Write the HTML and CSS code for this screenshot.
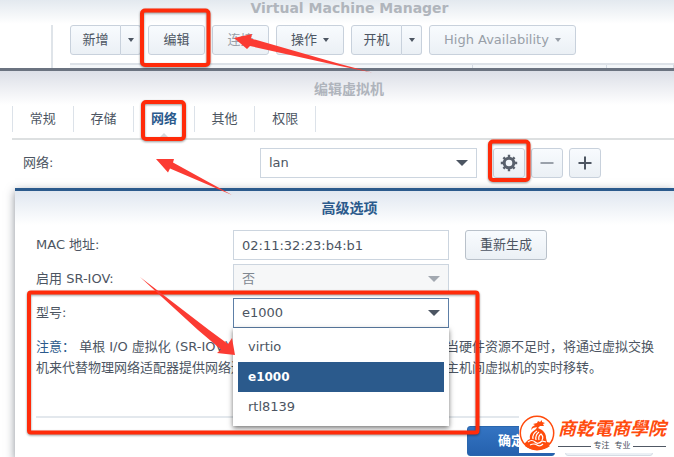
FILE: index.html
```html
<!DOCTYPE html>
<html lang="zh-CN">
<head>
<meta charset="utf-8">
<title>Virtual Machine Manager</title>
<link rel="stylesheet" href="styles.css">
</head>
<body>
<header class="manager">
  <h1 class="manager-title">Virtual Machine Manager</h1>
  <div class="manager-body">
    <div class="toolbar">
      <div class="split"><button class="btn">新增</button><button class="btn caret-btn" aria-label="新增选项"><span class="caret"></span></button></div>
      <button class="btn">编辑</button>
      <button class="btn" disabled>连接</button>
      <button class="btn menu">操作<span class="caret"></span></button>
      <div class="split"><button class="btn">开机</button><button class="btn caret-btn" aria-label="开机选项"><span class="caret"></span></button></div>
      <button class="btn menu" disabled>High Availability<span class="caret"></span></button>
    </div>
    <div class="columns"><span></span><span></span><span></span></div>
  </div>
</header>
<main class="editor">
  <h2 class="editor-title">编辑虚拟机</h2>
  <div class="tabbar">
    <nav class="tabs">
      <button class="tab">常规</button>
      <button class="tab">存储</button>
      <button class="tab active">网络</button>
      <button class="tab">其他</button>
      <button class="tab">权限</button>
    </nav>
  </div>
  <div class="network">
    <label for="network">网络:</label>
    <div class="select"><select id="network"><option>lan</option></select></div>
    <div class="tools">
      <button class="btn icon" aria-label="设置">
        <svg width="18" height="18" viewBox="0 0 18 18"><g stroke="#59616d" fill="none"><circle cx="9" cy="9" r="4.800" stroke-width="3"/><path stroke-width="2.400" d="M9 .8v3M9 14.200v3M.8 9h3M14.200 9h3M3.400 3.400l2 2M12.600 12.600l2 2M14.600 3.400l-2 2M5.400 12.600l-2 2"/></g></svg>
      </button>
      <button class="btn icon" aria-label="删除" disabled>
        <svg width="14" height="14" viewBox="0 0 14 14"><path d="M.5 7h13" stroke="#9aa1aa" stroke-width="2"/></svg>
      </button>
      <button class="btn icon" aria-label="添加">
        <svg width="14" height="14" viewBox="0 0 14 14"><path d="M.5 7h13M7 .5v13" stroke="#4d5561" stroke-width="2"/></svg>
      </button>
    </div>
  </div>
  <section class="panel">
    <h3 class="panel-title">高级选项</h3>
    <div class="form">
      <label for="mac">MAC 地址:</label>
      <input class="text" id="mac" value="02:11:32:23:b4:b1">
      <button class="btn regen">重新生成</button>
      <label for="sriov">启用 SR-IOV:</label>
      <div class="select"><select id="sriov" disabled><option>否</option></select></div>
      <label for="model">型号:</label>
      <div class="select open">
        <select id="model"><option>e1000</option></select>
        <ul class="options">
          <li>virtio</li>
          <li class="chosen">e1000</li>
          <li>rtl8139</li>
        </ul>
      </div>
    </div>
    <div class="note">
      <span><b>注意：</b>&nbsp;单根 I/O 虚拟化 (SR-IOV)</span><span>当硬件资源不足时，将通过虚拟交换</span>
      <span>机来代替物理网络适配器提供网络连</span><span>主机间虚拟机的实时移转。</span>
    </div>
    <footer class="actions">
      <button class="btn primary">确定</button>
      <button class="btn" aria-label="取消"></button>
    </footer>
  </section>
</main>

<svg class="marks" width="674" height="457" viewBox="0 0 674 457" aria-hidden="true">
  <g class="boxes">
    <rect x="142" y="10.500" width="66.500" height="54.500" rx="3"/>
    <rect x="143" y="102" width="41" height="37" rx="3"/>
    <rect x="490" y="141.500" width="38.500" height="38.500" rx="3"/>
    <rect x="29" y="292.500" width="448.500" height="140" rx="2"/>
  </g>
  <g fill="#fb3b33">
    <path d="M234 38L252 34L251 38.500L340 64L372 72.500L340 66L250 46L247 49Z"/>
    <path d="M156 159L174 159L173 162.500L232 195L170 168.500L168 172.500Z"/>
    <path d="M140 277L209 330L228 344L232 338L235 355L217 353L221 349.500L198 330Z"/>
  </g>
</svg>
<div class="brand">
  <svg width="36" height="38" viewBox="0 0 36 38" aria-hidden="true">
    <circle cx="18" cy="19" r="16.700" fill="#fff" stroke="#ff4b0c" stroke-width="1.500"/>
    <path fill="#ff4b0c" d="M6 29l3-3 2-1q-1-4 2-7l4-3 1-2-4 1-2 2 1-3 3-2-2-1 4-1 1-2 2 1 2-2 0 2 3 1-2 1 1 2-4 0-2 2 4 2q4 3 4 8l1 4 4 1-3 2 2 1q-5 4-13 4-7 0-12-4Z"/>
    <path fill="none" stroke="#fff" stroke-width="1.200" d="M14 25q-1-5 4-8M17 26q-1-5 3-8M20 26q-1-4 2-6 3 3 1 6M9 28q4-3 7 0t7-1l4 1M11 31q4-2 7 0t6-1"/>
  </svg>
  <div class="brand-words">
    <strong>商乾電商學院</strong>
    <small>专注&nbsp; 专业</small>
  </div>
</div>
</body>
</html>
```
FILE: styles.css
```css
* { box-sizing: border-box; }
body {
  margin: 0;
  min-height: 100vh;
  display: flex;
  flex-direction: column;
  position: relative;
  overflow: hidden;
  background: #fff;
  color: #4c5562;
  font: 13px/20px "DejaVu Sans", "Noto Sans CJK SC", sans-serif;
}
button, input, select { font: inherit; color: inherit; margin: 0; }
h1, h2, h3, ul { margin: 0; padding: 0; font-size: 14px; }

/* manager window */
.manager {
  height: 71px;
  border-bottom: 3px solid #6b7380;
  background: linear-gradient(#e3e9ef, #fff 24px);
}
.manager-title {
  height: 25px;
  padding-left: 25px;
  line-height: 16px;
  text-align: center;
  color: #b0b5bc;
}
.manager-body {
  height: 43px;
  margin-left: 51px;
  padding-left: 17px;
  border-left: 2px solid #dfe4e9;
}
.toolbar { display: flex; gap: 7px; }
.btn {
  display: flex;
  align-items: center;
  justify-content: center;
  height: 30px;
  min-width: 57px;
  padding: 0 14px;
  border: 1px solid #c8d1dc;
  border-radius: 3px;
  background: linear-gradient(#f8fbfe, #ebf0f5);
  white-space: nowrap;
}
.btn:disabled { color: #989fa8; }
.split { display: flex; }
.split .btn:first-child { min-width: 51px; padding: 0 11px; border-radius: 3px 0 0 3px; }
.split .caret-btn { min-width: 20px; padding: 0 6px; border-left: 0; border-radius: 0 3px 3px 0; }
.split .caret-btn { width: 20px; }
.menu { gap: 6px; }
.caret { border: 3px solid transparent; border-top: 4px solid currentColor; border-bottom: 0; }
.columns {
  display: grid;
  grid-template-columns: 403px 134px 1fr;
  height: 5px;
  margin-top: 8px;
  border-top: 2px solid #dde2e8;
  background: #f3f6f9;
}
.columns span { border-right: 1px solid #d3dae2; }

/* machine editor */
.editor {
  flex: 1;
  display: flex;
  flex-direction: column;
  background: linear-gradient(#dcdfe7, #fff 34px);
}
.editor-title { height: 35px; padding: 8px 0 0 24px; text-align: center; color: #afb4bc; }
.tabbar { margin-left: 12px; padding-bottom: 6px; border-bottom: 2px solid #dde0e1; }
.tabs {
  display: grid;
  grid-template-columns: repeat(5, 1fr);
  width: 304px;
  border-left: 1px solid #dce2e9;
}
.tab {
  position: relative;
  height: 26px;
  padding: 0;
  border: 0;
  border-right: 1px solid #dce2e9;
  background: none;
}
.tab.active { color: #2b5a8c; font-weight: bold; }
.tab.active::after {
  content: "";
  position: absolute;
  bottom: -6px;
  left: 50%;
  margin-left: -5px;
  border: 5px solid transparent;
  border-top: 0;
  border-bottom-color: #d7dadd;
}
.network {
  display: grid;
  grid-template-columns: 237px 217px auto;
  align-items: center;
  padding: 8px 0 10px 23px;
}
.tools { display: flex; gap: 6px; margin-left: 16px; }
.icon { min-width: 32px; width: 32px; padding: 0; }
.select { position: relative; }
.select::after {
  content: "";
  position: absolute;
  top: 12px;
  right: 9px;
  border: 6px solid transparent;
  border-top-color: #4c5562;
  border-bottom: 0;
  pointer-events: none;
}
.select:has(:disabled)::after { border-top-color: #a2a8b0; }
select, .text {
  display: block;
  appearance: none;
  width: 100%;
  height: 30px;
  padding: 0 8px;
  border: 1px solid #ccd5df;
  border-radius: 0;
  background: #fff;
}
select:disabled { background: #f6f7f8; color: #7f8790; opacity: 1; }

/* advanced options */
.panel {
  flex: 1;
  margin-left: 15px;
  padding: 0 21px 2px;
  border-top: 3px solid #2b5a8c;
  background: linear-gradient(#e0e7f0, #fff 34px);
  box-shadow: 0 3px 9px rgba(40, 50, 65, .55);
}
.panel-title { height: 39px; padding: 7px 0 0 10px; text-align: center; color: #2b5a8c; }
.form {
  display: grid;
  grid-template-columns: 197px 216px 1fr;
  row-gap: 4px;
  align-items: center;
}
.form label { grid-column: 1; }
.regen { justify-self: start; margin-left: 16px; border-color: #b9c1ca; }
.open select { border-color: #5d7fa7; }
.options {
  position: absolute;
  z-index: 2;
  top: 30px;
  left: 0;
  right: 0;
  padding: 4px 5px;
  background: #fff;
  box-shadow: 0 2px 5px rgba(0, 0, 0, .55);
  list-style: none;
  font-size: 13px;
}
.options li { height: 30px; padding-left: 10px; line-height: 30px; }
.options .chosen { background: #2b5a8c; color: #fff; font-size: 12px; font-weight: bold; }
.note {
  display: grid;
  grid-template-columns: 410px 1fr;
  height: 80px;
  margin-top: 8px;
  grid-auto-rows: 21px;
  line-height: 21px;
  white-space: nowrap;
}
.note b { color: #2b5a8c; font-weight: normal; }
.actions {
  display: flex;
  justify-content: flex-end;
  gap: 10px;
  padding-top: 8px;
  border-top: 2px solid #e3e8ed;
}
.actions .btn { width: 88px; border-color: #d5dce4; }
.actions .primary {
  border-color: #2a66ad;
  background: linear-gradient(#3474c2, #2561ae);
  color: #fff;
  font-weight: bold;
}

/* annotations and brand stamp lie over the page */
.marks { position: absolute; z-index: 3; top: 0; left: 0; pointer-events: none; }
.boxes { fill: none; stroke: #ff2b0a; stroke-width: 4; filter: drop-shadow(0 1px 1px rgba(0, 0, 0, .4)); }
.brand {
  position: absolute;
  z-index: 4;
  right: 0;
  bottom: 5px;
  display: flex;
  gap: 3px;
  width: 155px;
  height: 39px;
  background: #fff;
}
.brand-words { width: 108px; white-space: nowrap; }
.brand strong { display: block; color: #ff4b0c; font: italic bold 18px/27px "Noto Sans CJK TC", sans-serif; }
.brand small { display: flex; align-items: center; gap: 2px; color: #444b57; font-size: 8px; line-height: 10px; }
.brand small::before, .brand small::after { content: ""; flex: 1; height: 1px; background: #505864; }
```
